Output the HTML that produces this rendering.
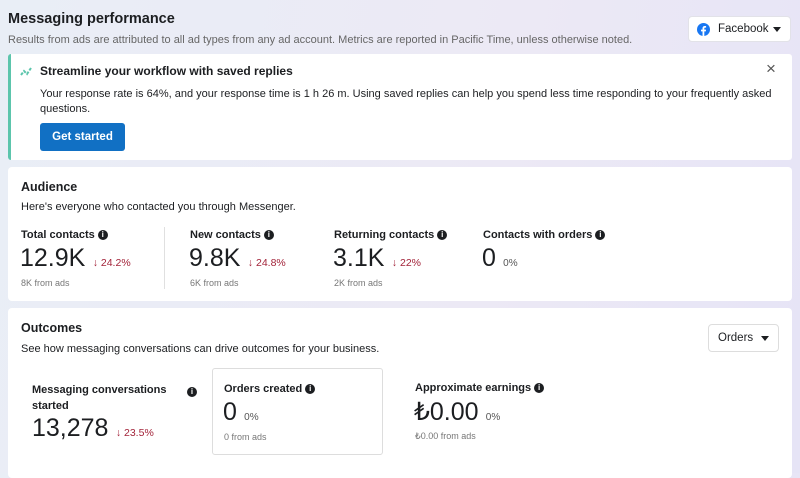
<!DOCTYPE html>
<html><head><meta charset="utf-8"><style>
*{margin:0;padding:0;box-sizing:border-box}
body{width:800px;height:473px;overflow:hidden;font-family:"Liberation Sans",sans-serif;color:#1c1e21;background:linear-gradient(100deg,#e9eef6 0%,#ece9f5 60%,#e6e4f6 100%);position:relative}
.a{position:absolute;white-space:nowrap}
.card{position:absolute;background:#fff;border-radius:4px}
.b{font-weight:bold}
.i{display:inline-block;width:10px;height:10px;border-radius:50%;background:#1c1e21;color:#fff;font-size:8px;line-height:10px;text-align:center;font-weight:bold;vertical-align:1px;margin-left:3px}
.big{font-size:25px;color:#1c1e21}
.red{font-size:10.5px;color:#a3243a}
.sm{font-size:9px;color:#777}
.lbl{font-size:11px;font-weight:bold}
</style></head><body>
<div class="a b" style="left:8px;top:11px;font-size:14.5px">Messaging performance</div>
<div class="a" style="left:8px;top:34px;font-size:11px;color:#666">Results from ads are attributed to all ad types from any ad account. Metrics are reported in Pacific Time, unless otherwise noted.</div>
<div class="card" style="left:688px;top:16px;width:103px;height:26px;border:1px solid #e2e2e8">
 <svg class="a" style="left:8px;top:6px" width="13" height="13" viewBox="0 0 24 24"><circle cx="12" cy="12" r="12" fill="#1877f2"/><path d="M13.5 24v-8.5h2.8l.4-3.3h-3.2v-2c0-.9.3-1.6 1.6-1.6h1.7V5.7c-.3 0-1.3-.1-2.5-.1-2.5 0-4.1 1.5-4.1 4.2v2.4H7.4v3.3h2.8V24z" fill="#fff"/></svg>
 <div class="a" style="left:29px;top:6px;font-size:11.5px">Facebook</div>
 <div class="a" style="left:84px;top:10px;border-left:4px solid transparent;border-right:4px solid transparent;border-top:5px solid #1c1e21"></div>
</div>
<div class="card" style="left:8px;top:54px;width:784px;height:106px;border-left:3px solid #5cc5ac;border-radius:3px">
 <svg class="a" style="left:9px;top:11px" width="14" height="12" viewBox="0 0 14 12"><path d="M1 10l3-4 3 3 4-6" stroke="#5cc5ac" stroke-width="2" fill="none" stroke-dasharray="3 1.5"/></svg>
 <div class="a b" style="left:29px;top:10px;font-size:12px">Streamline your workflow with saved replies</div>
 <div class="a" style="left:29px;top:33px;font-size:11px;line-height:15px;white-space:normal;width:740px">Your response rate is 64%, and your response time is 1 h 26 m. Using saved replies can help you spend less time responding to your frequently asked questions.</div>
 <div class="a b" style="left:29px;top:69px;width:85px;height:28px;background:#1170c4;color:#fff;border-radius:3px;font-size:11.5px;text-align:center;line-height:28px">Get started</div>
 <div class="a" style="left:755px;top:5px;font-size:17px;color:#555">×</div>
</div>
<div class="card" style="left:8px;top:167px;width:784px;height:134px">
 <div class="a b" style="left:13px;top:13px;font-size:12.5px">Audience</div>
 <div class="a" style="left:13px;top:34px;font-size:11px">Here's everyone who contacted you through Messenger.</div>
 <div class="a" style="left:156px;top:60px;width:1px;height:62px;background:#e0e0e0"></div>
 <div class="a lbl" style="left:13px;top:62px">Total contacts<span class="i">i</span></div>
 <div class="a" style="left:12px;top:77px"><span class="big">12.9K</span> <span class="red">&nbsp;↓ 24.2%</span></div>
 <div class="a sm" style="left:13px;top:111px">8K from ads</div>
 <div class="a lbl" style="left:182px;top:62px">New contacts<span class="i">i</span></div>
 <div class="a" style="left:181px;top:77px"><span class="big">9.8K</span> <span class="red">&nbsp;↓ 24.8%</span></div>
 <div class="a sm" style="left:182px;top:111px">6K from ads</div>
 <div class="a lbl" style="left:326px;top:62px">Returning contacts<span class="i">i</span></div>
 <div class="a" style="left:325px;top:77px"><span class="big">3.1K</span> <span class="red">&nbsp;↓ 22%</span></div>
 <div class="a sm" style="left:326px;top:111px">2K from ads</div>
 <div class="a lbl" style="left:475px;top:62px">Contacts with orders<span class="i">i</span></div>
 <div class="a" style="left:474px;top:77px"><span class="big">0</span> <span class="sm" style="font-size:10px;color:#555">&nbsp;0%</span></div>
</div>
<div class="card" style="left:8px;top:308px;width:784px;height:170px">
 <div class="a b" style="left:13px;top:13px;font-size:12.5px">Outcomes</div>
 <div class="a" style="left:13px;top:35px;font-size:11px">See how messaging conversations can drive outcomes for your business.</div>
 <div class="a" style="left:700px;top:16px;width:71px;height:28px;border:1px solid #ddd;border-radius:4px">
  <div class="a" style="left:9px;top:7px;font-size:11.5px">Orders</div>
  <div class="a" style="left:52px;top:11px;border-left:4px solid transparent;border-right:4px solid transparent;border-top:5px solid #1c1e21"></div>
 </div>
 <div class="a lbl" style="left:24px;top:74px;line-height:16px">Messaging conversations<br>started</div>
 <div class="a" style="left:176px;top:74px"><span class="i">i</span></div>
 <div class="a" style="left:24px;top:106px"><span class="big">13,278</span> <span class="red">&nbsp;↓ 23.5%</span></div>
 <div class="a" style="left:204px;top:60px;width:171px;height:87px;border:1px solid #ddd;border-radius:3px">
  <div class="a lbl" style="left:11px;top:14px">Orders created<span class="i">i</span></div>
  <div class="a" style="left:10px;top:29px"><span class="big">0</span> <span class="sm" style="font-size:10px;color:#555">&nbsp;0%</span></div>
  <div class="a sm" style="left:11px;top:63px">0 from ads</div>
 </div>
 <div class="a lbl" style="left:407px;top:74px">Approximate earnings<span class="i">i</span></div>
 <div class="a" style="left:406px;top:89px"><span class="big">₺0.00</span> <span class="sm" style="font-size:10px;color:#555">&nbsp;0%</span></div>
 <div class="a sm" style="left:407px;top:123px">₺0.00 from ads</div>
</div>
</body></html>
